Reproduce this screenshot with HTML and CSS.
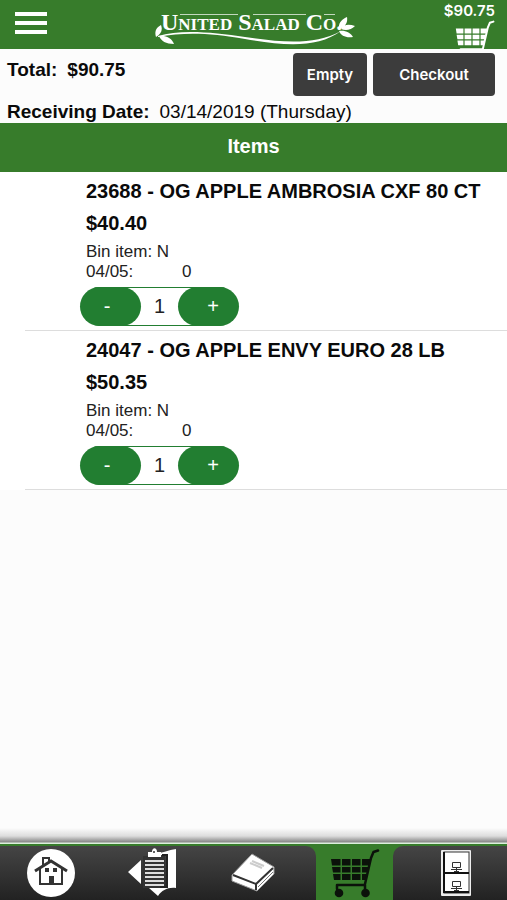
FILE: index.html
```html
<!DOCTYPE html>
<html lang="en">

<head>
  <meta charset="UTF-8" />
  <meta name="viewport" content="width=device-width, initial-scale=1.0" />
  <title>United Salad Co. - Cart</title>
  <link rel="stylesheet" href="styles.css">
</head>

<body>
  <!-- shared cart icon -->
  <svg class="sprite" aria-hidden="true">
    <symbol id="cart" viewBox="0 0 50 49">
      <path fill="currentColor" d="M1 10h9.5v6.5H2zM12 10h8.5v6.5H12zM22 10h8.5v6.5H22zM32 10h9l-2 6.5h-7zM2 18h8.5v5.5H3zM12 18h8.5v5.5H12zM22 18h8.5v5.5H22zM32 18h7l-1.5 5.5H32zM3 25h7.5v6H4zM12 25h8.5v6H12zM22 25h8.5v6H22zM32 25h5.5l-2 6H32z" />
      <path fill="none" stroke="currentColor" stroke-width="2.500" stroke-linecap="round" stroke-linejoin="round" d="M48 1.500L43.500 3L41 9L35 35M7 40V36H35V40" />
      <circle cx="9" cy="44" r="4.300" fill="currentColor" />
      <circle cx="35.500" cy="44" r="4.300" fill="currentColor" />
    </symbol>
  </svg>

  <header class="header">
    <button class="menu" aria-label="Menu">
      <span></span>
      <span></span>
      <span></span>
    </button>
    <svg class="logo" viewBox="0 0 200 34" role="img" aria-label="United Salad Co.">
      <text class="logo-text" x="6" y="18">United Salad Co.</text>
      <path fill="none" stroke="#fff" stroke-opacity="0.7" stroke-width="1" d="M25 2.500H83M98 2.500H151M169 2.500H180" />
      <path fill="#fff" d="M3 24C25 17 58 20 90 25C130 31 160 33 186 19C163 36 130 34 90 27C55 21 30 20 3 25z" />
      <path fill="#fff" d="M1 25C-1 19 2 15 6 13C8 18 6 22 1 25zM4 24C12 23 17 27 19 32C11 32 6 29 4 24zM184 17C183 11 187 7 192 5C193 11 190 15 184 17zM186 17C189 12 194 12 200 14C196 18 191 19 186 17zM184 19C190 18 196 21 198 25C191 26 186 24 184 19z" />
    </svg>
    <a class="header-cart" href="#" aria-label="Cart $90.75">
      <span>$90.75</span>
      <svg><use href="#cart" /></svg>
    </a>
  </header>

  <main>
    <section class="summary">
      <div class="summary-top">
        <p class="total"><span>Total:</span><span>$90.75</span></p>
        <div class="actions">
          <button class="btn">Empty</button>
          <button class="btn btn-wide">Checkout</button>
        </div>
      </div>
      <p class="date"><b>Receiving Date:</b><span>03/14/2019 (Thursday)</span></p>
    </section>

    <h1 class="bar">Items</h1>

    <ul class="items">
      <li class="item">
        <h2>23688 - OG APPLE AMBROSIA CXF 80 CT</h2>
        <p class="price">$40.40</p>
        <p class="info">Bin item: N</p>
        <p class="info stock"><span>04/05:</span><span>0</span></p>
        <div class="stepper">
          <button class="minus" aria-label="Decrease">-</button>
          <input type="text" inputmode="numeric" value="1" aria-label="Quantity of 23688">
          <button class="plus" aria-label="Increase">+</button>
        </div>
      </li>
      <li class="item">
        <h2>24047 - OG APPLE ENVY EURO 28 LB</h2>
        <p class="price">$50.35</p>
        <p class="info">Bin item: N</p>
        <p class="info stock"><span>04/05:</span><span>0</span></p>
        <div class="stepper">
          <button class="minus" aria-label="Decrease">-</button>
          <input type="text" inputmode="numeric" value="1" aria-label="Quantity of 24047">
          <button class="plus" aria-label="Increase">+</button>
        </div>
      </li>
    </ul>
  </main>

  <nav class="tabs">
    <div class="tabs-left">
      <a href="#" aria-label="Home">
        <svg width="48" height="50" viewBox="0 0 48 50">
          <circle cx="24" cy="25" r="24" fill="#fff" />
          <g fill="none" stroke="#333" stroke-width="2">
            <path d="M8 23L24 13L40 23" stroke-width="3" />
            <path d="M13 21V36H35V21M16 17V10H22V14" />
          </g>
          <path fill="#333" d="M22 28h5v8h-5zM18 20h4v4h-4zM26 20h4v4h-4z" />
        </svg>
      </a>
      <a href="#" aria-label="Order guide">
        <svg width="50" height="50" viewBox="0 0 50 50">
          <path fill="#fff" d="M14 12V36L1 24zM25 7C34 5 42 2 49 1V40C41 39 35 42 31 48L22 40H40V7z" />
          <path fill="#333" d="M16 8H38V40H16z" />
          <path fill="#fff" d="M21 4H25C25 -1 30 -1 30 4H34V9H21z" />
          <circle cx="27" cy="4" r="1" fill="#333" />
          <path stroke="#ddd" stroke-width="2" d="M18 13H37M18 17H37M18 21H37M18 25H37M18 29H37M18 33H37M18 37H37" />
          <path fill="none" stroke="#222" stroke-width="2" d="M35 7H40V39H33" />
        </svg>
      </a>
      <a href="#" aria-label="Catalog">
        <svg width="44" height="40" viewBox="0 0 44 40">
          <path fill="#fff" stroke="#999" d="M1 22L21 1L43 14V21L26 38L1 28z" />
          <path fill="none" stroke="#333" stroke-width="2" d="M2 22L25 31L42 15M25 31V37" />
          <path stroke="#ccc" stroke-width="2" d="M21 8L33 13M19 10L31 15" />
          <path stroke="#777" stroke-width="1" d="M27 34L42 19" />
        </svg>
      </a>
    </div>
    <a class="tab-active" href="#" aria-label="Cart" aria-current="page">
      <svg width="50" height="49"><use href="#cart" /></svg>
    </a>
    <div class="tabs-right">
      <a href="#" aria-label="Orders">
        <svg width="30" height="46" viewBox="0 0 30 46">
          <rect width="30" height="46" rx="1" fill="#eee" />
          <rect x="3" y="2" width="25" height="41" fill="#fff" stroke="#333" />
          <path fill="none" stroke="#111" stroke-width="2" d="M3 2V42H28M3 23H28" />
          <path fill="none" stroke="#333" stroke-width="1" d="M11.500 12.500H19.500V17.500H11.500zM10 19.500H21M13 21.500H18M15.500 17V21M11.500 31.500H19.500V36.500H11.500zM10 38.500H21M13 40.500H18M15.500 36V40" />
        </svg>
      </a>
    </div>
  </nav>
</body>

</html>
```
FILE: styles.css
```css
* {
  box-sizing: border-box;
}

body {
  margin: 0;
  min-height: 100vh;
  display: flex;
  flex-direction: column;
  background: #fcfcfc;
  color: #0a0a0a;
  font-family: "Liberation Sans", Arial, sans-serif;
}

p,
h1,
h2,
ul {
  margin: 0;
  padding: 0;
}

button {
  appearance: none;
  border: none;
  cursor: pointer;
}

.sprite {
  display: none;
}

/* header */
.header {
  height: 49px;
  display: grid;
  grid-template-columns: 1fr 200px 1fr;
  padding: 0 12px 0 15px;
  background: #377c2b;
  overflow: hidden;
}

.menu {
  width: 32px;
  height: 23px;
  margin-top: 12px;
  padding: 0;
  display: flex;
  flex-direction: column;
  gap: 5px;
  background: none;
}

.menu span {
  width: 100%;
  height: 4px;
  background: #fff;
}

.logo {
  width: 200px;
  height: 34px;
  margin-top: 12px;
  overflow: visible;
}

.logo-text {
  fill: #fff;
  font-family: "Liberation Serif", "Times New Roman", serif;
  font-size: 24px;
  font-weight: bold;
  font-variant: small-caps;
}

.header-cart {
  display: flex;
  flex-direction: column;
  align-items: flex-end;
  padding-top: 2px;
  color: #fff;
  font: 600 15px/18px Inter, sans-serif;
  text-decoration: none;
}

.header-cart svg {
  flex: none;
  width: 40px;
  height: 40px;
}

/* summary */
.summary {
  padding: 4px 12px 0 7px;
}

.summary-top {
  display: flex;
  justify-content: space-between;
}

.total {
  display: flex;
  gap: 10px;
  padding-top: 5px;
  font-size: 19px;
  line-height: 24px;
  font-weight: bold;
}

.actions {
  display: flex;
  gap: 6px;
}

.btn {
  width: 74px;
  height: 43px;
  padding: 0;
  border-radius: 4px;
  background: #3c3c3c;
  color: #fff;
  font: 600 15px Inter, sans-serif;
}

.btn-wide {
  width: 122px;
}

.date {
  display: flex;
  gap: 10px;
  padding-top: 4px;
  font-size: 19px;
  line-height: 23px;
}

.bar {
  padding: 11px 0 14px;
  background: #377c2b;
  color: #fff;
  font-size: 20px;
  line-height: 24px;
  text-align: center;
}

/* items */
.items {
  list-style: none;
  background: #fff;
}

.item {
  margin-left: 25px;
  padding: 7px 0 4px 61px;
  border-bottom: 1px solid #ddd;
}

.item h2,
.price {
  font-size: 20px;
  line-height: 24px;
  font-weight: bold;
}

.price {
  margin: 8px 0 7px;
}

.info {
  color: #222;
  font-size: 17px;
  line-height: 20px;
}

.stock {
  display: flex;
}

.stock span:first-child {
  width: 96px;
}

.stepper {
  display: flex;
  width: 159px;
  height: 39px;
  margin: 5px 0 0 -6px;
  border-radius: 20px;
  background: linear-gradient(#227e31 1px, #fff 1px, #fff 38px, #227e31 38px);
}

.stepper button {
  width: 61px;
  border-radius: 20px;
  background: #227e31;
  color: #fff;
  font: 20px "Liberation Sans", Arial, sans-serif;
}

.stepper .minus {
  padding: 0 14px 0 7px;
}

.stepper .plus {
  padding: 0 7px 0 16px;
}

.stepper input {
  flex: 1;
  min-width: 0;
  padding: 0;
  border: none;
  background: none;
  color: #222;
  font: 20px "Liberation Sans", Arial, sans-serif;
  text-align: center;
}

/* bottom tabs */
.tabs {
  position: sticky;
  bottom: 0;
  display: flex;
  height: 72px;
  margin-top: auto;
  padding-top: 18px;
  background: linear-gradient(#fcfcfc, #ddd 8px, #888 14px, #ddeedd 15px, #ddeedd 16px, #377c2b 16px);
}

.tabs a {
  flex: 1;
  display: flex;
  align-items: center;
  justify-content: center;
}

.tabs-left,
.tabs-right {
  display: flex;
  background: linear-gradient(#454545, #222);
}

.tabs-left {
  flex: 304;
  padding-right: 12px;
  border-top-right-radius: 10px;
}

.tabs-right {
  flex: 102;
  padding-left: 12px;
  border-top-left-radius: 10px;
}

.tabs .tab-active {
  flex: 77;
  color: #0b120a;
}
```
